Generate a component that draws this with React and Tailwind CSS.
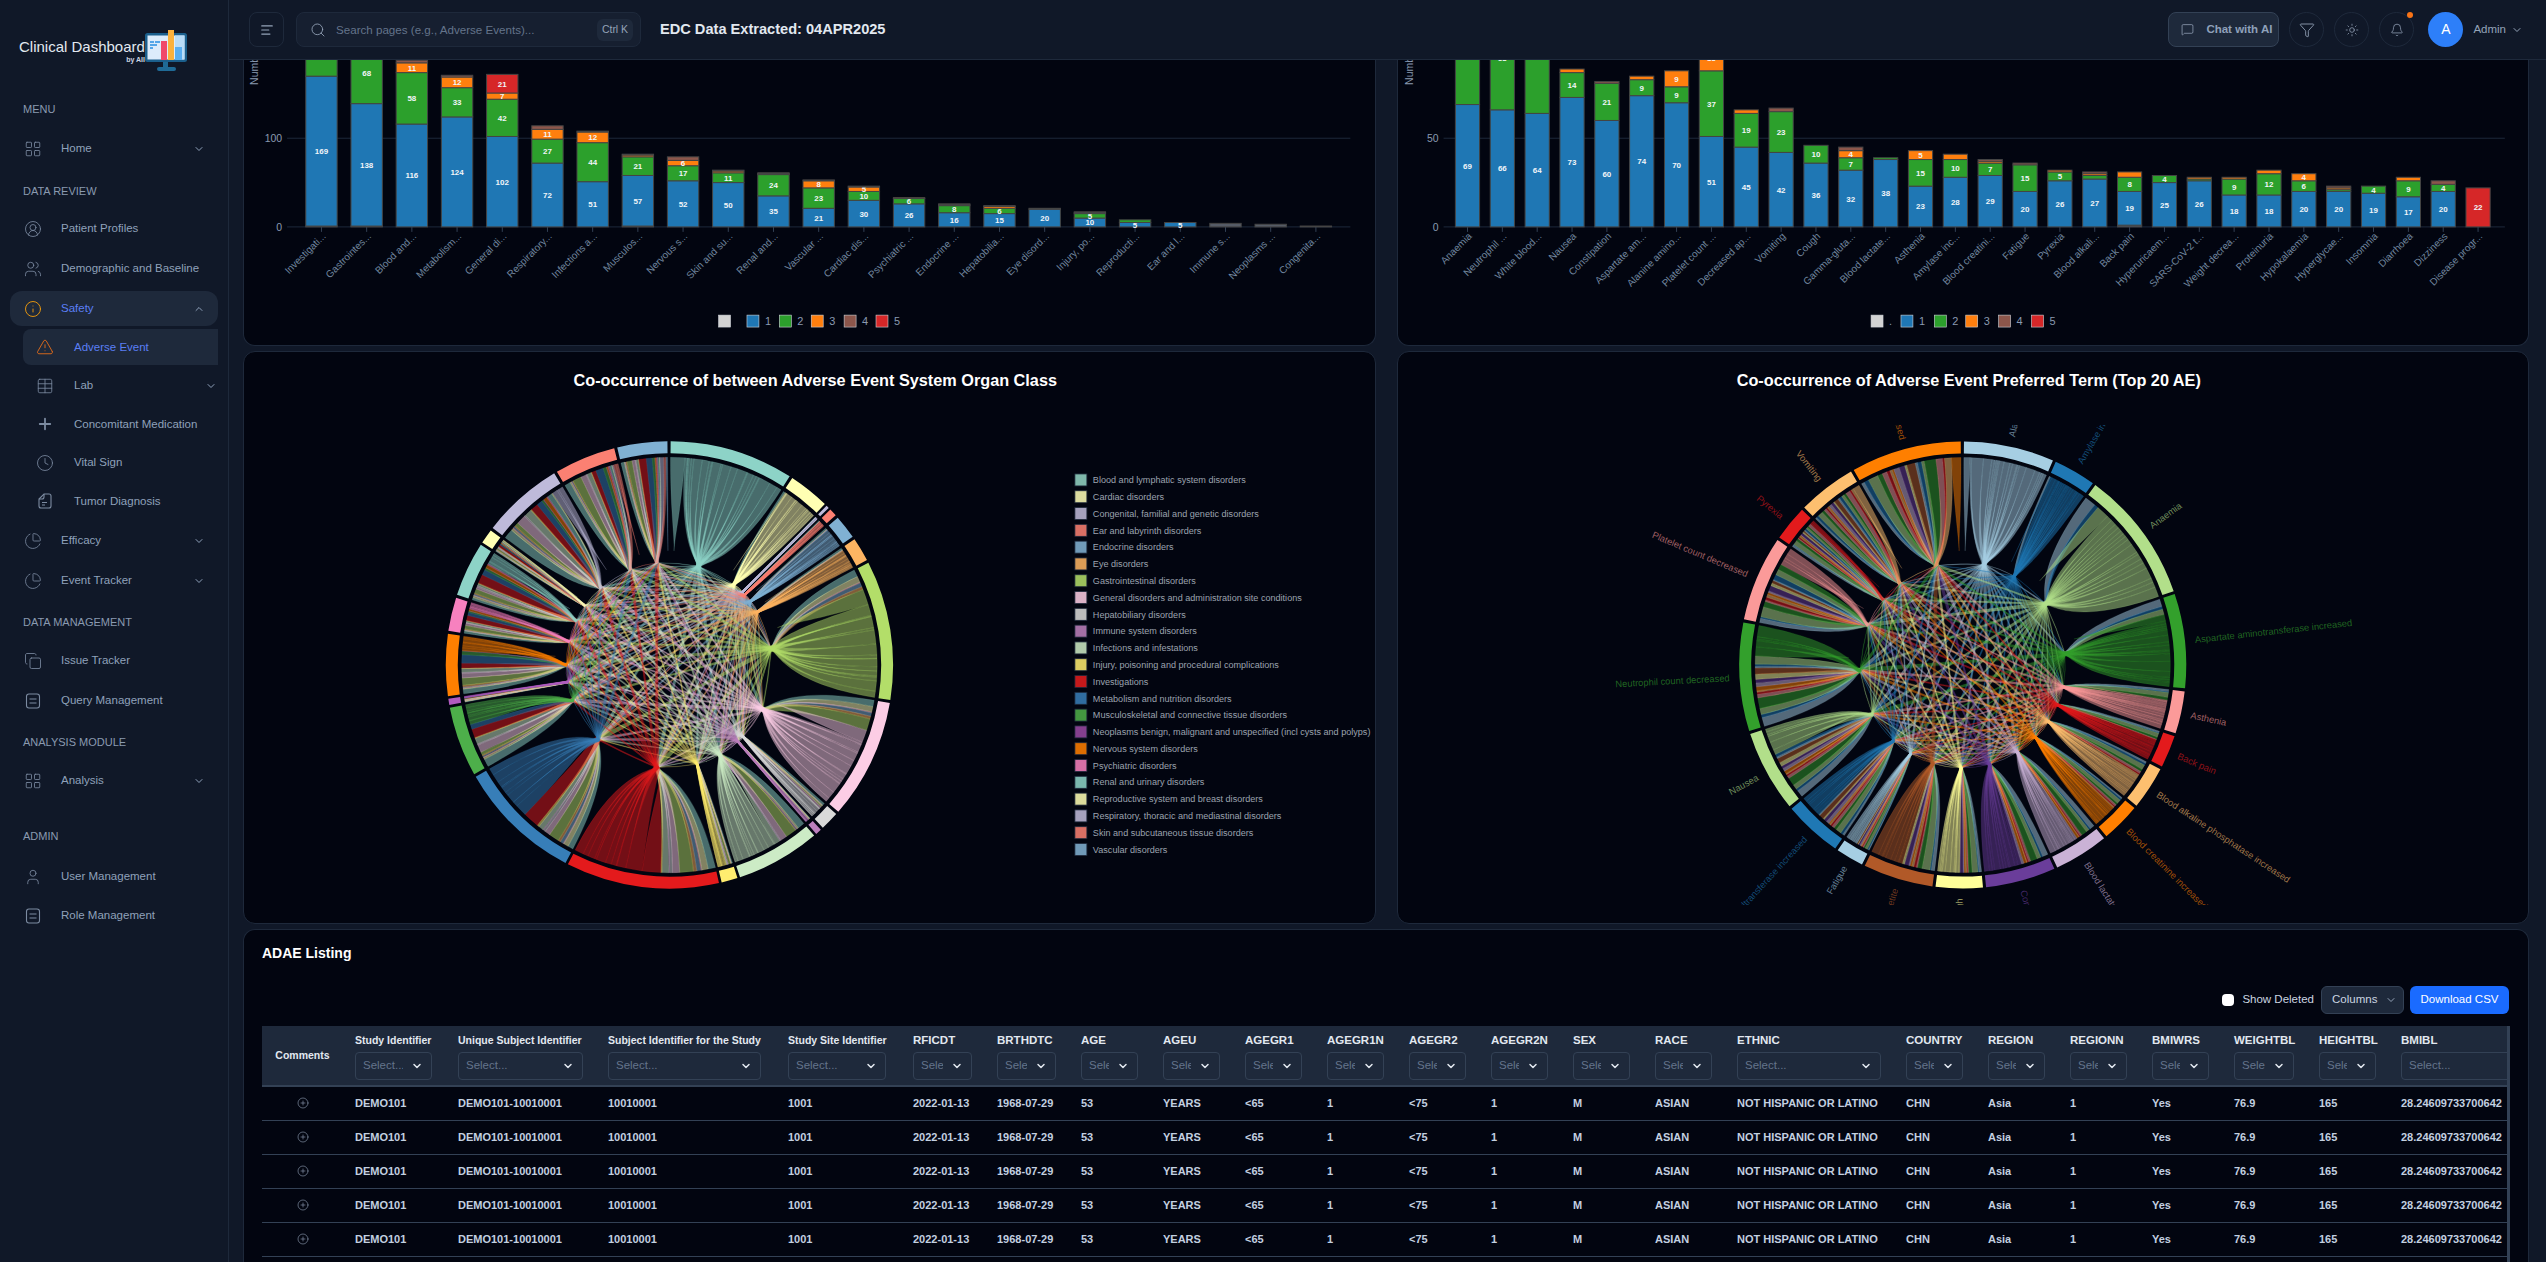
import React from "react";
import {
  ChevronDown, ChevronUp, CircleUserRound, Users, Info, TriangleAlert, Table, Plus, Clock, ChartPie, Copy, User,
  LayoutGrid, Search, AlignLeft, MessageSquare, Funnel, Sun, Bell, CirclePlus,
} from "lucide-react";

const FONT = "[font-family:'Liberation_Sans',Arial,sans-serif]";

const DocLines = ({ size = 18, className = "" }) => (
  <svg width={size} height={size} viewBox="0 0 18 18" fill="none" stroke="currentColor" strokeWidth="1.1" className={className}>
    <rect x="2.5" y="2" width="13" height="14" rx="2.5" />
    <path d="M5.5 7h7M5.5 11h7" />
  </svg>
);
const TumorDoc = ({ size = 18, className = "" }) => (
  <svg width={size} height={size} viewBox="0 0 18 18" fill="none" stroke="currentColor" strokeWidth="1.1" className={className}>
    <path d="M8 2h5a2 2 0 0 1 2 2v10a2 2 0 0 1-2 2H5a2 2 0 0 1-2-2V7z" />
    <path d="M8 2v3a2 2 0 0 1-2 2H3M6 10.5h5M6 13h3" />
  </svg>
);

const Logo = () => (
  <svg width="46" height="44" viewBox="143 29 46 44" className="shrink-0 -ml-[2px]">
    <rect x="163" y="61" width="5" height="7" fill="#1f6a96" />
    <rect x="157" y="67" width="19" height="4" rx="2" fill="#1f6a96" />
    <rect x="145" y="33" width="42" height="29" rx="2.5" fill="#1b5f8c" />
    <rect x="147.5" y="35.5" width="37" height="24" fill="#dcecfb" />
    <rect x="175" y="35.5" width="9.5" height="24" fill="#b9dcf7" />
    <rect x="150" y="41" width="4" height="2" fill="#54a6e8" />
    <rect x="155" y="41" width="5" height="2" fill="#54a6e8" />
    <rect x="150" y="44" width="7" height="2" fill="#54a6e8" />
    <rect x="150" y="47" width="3" height="2" fill="#54a6e8" />
    <rect x="161" y="41" width="6" height="19" fill="#f0486a" />
    <rect x="168" y="30" width="6" height="30" fill="#fbb13c" />
    <rect x="175" y="47" width="7" height="13" fill="#5aaef0" />
  </svg>
);

function Section({ children, className = "" }) {
  return <div className={`h-5 flex items-center pl-[13px] text-[11px] text-[#8a9ab0] uppercase ${className}`}>{children}</div>;
}
function Item({ icon, label, chevron }) {
  return (
    <div className="h-10 flex items-center">
      <div className="w-[51px] pl-[14px] shrink-0 text-[#7c8ba1] flex items-center">{icon}</div>
      <span className="flex-1 text-[11.5px] font-medium text-[#8fa1ba] whitespace-nowrap">{label}</span>
      {chevron && <ChevronDown size={12} className="text-[#8fa1ba] mr-[13px]" />}
    </div>
  );
}
function SubItem({ icon, label, chevron, active }) {
  return (
    <div className="h-[38.5px] flex items-center ml-[13px]">
      <div className={`flex items-center w-full h-[36px] rounded-l-lg ${active ? "bg-[#1e293b]" : ""}`}>
        <div className={`w-[51px] pl-[13px] shrink-0 flex items-center ${active ? "text-[#f97316]" : "text-[#7c8ba1]"}`}>{icon}</div>
        <span className={`flex-1 text-[11.5px] font-medium whitespace-nowrap ${active ? "text-[#5b7ff5]" : "text-[#8fa1ba]"}`}>{label}</span>
        {chevron && <ChevronDown size={12} className="text-[#8fa1ba] mr-[1px]" />}
      </div>
    </div>
  );
}

function Sidebar() {
  const ic = { size: 18, strokeWidth: 1.1 };
  return (
    <aside className="w-[229px] shrink-0 h-full bg-[#101828] border-r border-[#1e293b] overflow-hidden">
      <div className="h-[99px] pt-[29px] pl-[19px] flex items-start">
        <div className="w-[126px] pt-[9px] shrink-0">
          <div className="text-[15px] leading-[18px] text-[#e2e8f0] whitespace-nowrap">Clinical Dashboard</div>
          <div className="text-[7px] leading-[8px] font-bold text-[#cbd5e1] text-right">by AII</div>
        </div>
        <Logo />
      </div>
      <div className="mx-[10px]">
        <Section className="mb-[10px]">Menu</Section>
        <Item icon={<LayoutGrid {...ic} />} label="Home" chevron />
        <Section className="mt-[12px] mb-2">Data Review</Section>
        <Item icon={<CircleUserRound {...ic} />} label="Patient Profiles" />
        <Item icon={<Users {...ic} />} label="Demographic and Baseline" />
        <div className="h-[39px] flex items-start">
          <div className="mt-[2px] h-[35px] w-full rounded-xl bg-[#1e293b] flex items-center">
            <div className="w-[51px] pl-[14px] shrink-0 text-[#f59e0b]"><Info size={18} strokeWidth={1.2} /></div>
            <span className="flex-1 text-[11.5px] font-medium text-[#5b7ff5]">Safety</span>
            <ChevronUp size={12} className="text-[#8fa1ba] mr-[13px]" />
          </div>
        </div>
        <SubItem active icon={<TriangleAlert {...ic} />} label="Adverse Event" />
        <SubItem icon={<Table {...ic} />} label="Lab" chevron />
        <SubItem icon={<Plus size={18} strokeWidth={2.4} />} label="Concomitant Medication" />
        <SubItem icon={<Clock {...ic} />} label="Vital Sign" />
        <SubItem icon={<TumorDoc />} label="Tumor Diagnosis" />
        <Item icon={<ChartPie {...ic} />} label="Efficacy" chevron />
        <Item icon={<ChartPie {...ic} />} label="Event Tracker" chevron />
        <Section className="mt-[12px] mb-2">Data Management</Section>
        <Item icon={<Copy {...ic} />} label="Issue Tracker" />
        <Item icon={<DocLines />} label="Query Management" />
        <Section className="mt-[12px] mb-2">Analysis Module</Section>
        <Item icon={<LayoutGrid {...ic} />} label="Analysis" chevron />
        <Section className="mt-[26px] mb-[10px]">Admin</Section>
        <Item icon={<User {...ic} />} label="User Management" />
        <div className="-mt-[1px]"><Item icon={<DocLines />} label="Role Management" /></div>
      </div>
    </aside>
  );
}

function Header() {
  const round = "w-[35px] h-[35px] rounded-full border border-[#1e293b] flex items-center justify-center text-[#94a3b8]";
  return (
    <header className="h-[60px] shrink-0 bg-[#101828] border-b border-[#1e293b] flex items-center pl-[20px] pr-[23px]">
      <div className="w-[35px] h-[35px] rounded-lg border border-[#1e293b] flex items-center justify-center text-[#94a3b8]"><AlignLeft size={14} /></div>
      <div className="ml-[12px] w-[345px] h-[35px] rounded-lg border border-[#1e293b] bg-[#161f30] flex items-center pl-[13px] pr-[7px]">
        <Search size={16} strokeWidth={1.3} className="text-[#94a3b8]" />
        <span className="ml-[10px] flex-1 text-[11.6px] text-[#64748b] whitespace-nowrap">Search pages (e.g., Adverse Events)...</span>
        <span className="w-[36px] h-[22px] rounded-md bg-[#1e293b] text-[10.5px] text-[#94a3b8] flex items-center justify-center">Ctrl K</span>
      </div>
      <div className="ml-[19px] text-[14.6px] font-bold text-[#e2e8f0] whitespace-nowrap">EDC Data Extracted: 04APR2025</div>
      <div className="flex-1" />
      <div className="w-[111px] h-[35px] rounded-lg border border-[#334155] bg-[#1e293b] flex items-center pl-[12px] text-[#94a3b8]">
        <MessageSquare size={13} strokeWidth={1.4} />
        <span className="ml-[12px] text-[11.5px] font-bold text-[#8fa1ba] whitespace-nowrap">Chat with AI</span>
      </div>
      <div className={`ml-[10px] ${round}`}><Funnel size={16} strokeWidth={1.3} /></div>
      <div className={`ml-[10px] ${round}`}><Sun size={14} strokeWidth={1.3} /></div>
      <div className={`ml-[10px] relative ${round}`}>
        <Bell size={14} strokeWidth={1.3} />
        <span className="absolute -top-[1px] right-[0px] w-[6px] h-[6px] rounded-full bg-[#f97316]" />
      </div>
      <div className="ml-[14px] w-[35px] h-[35px] rounded-full bg-[#2d7ff9] text-white text-[14px] font-medium flex items-center justify-center">A</div>
      <span className="ml-[10px] text-[11.5px] text-[#94a3b8]">Admin</span>
      <ChevronDown size={12} className="ml-[5px] text-[#94a3b8]" />
    </header>
  );
}

const GRADE = ["#555b66", "#1f77b4", "#2ca02c", "#ff7f0e", "#8c564b", "#d62728"];

const LEFT_BARS = [
  ["Investigati...", [1, 169, 66]], ["Gastrointes...", [1, 138, 68]], ["Blood and...", [0, 116, 58, 11, 3]],
  ["Metabolism...", [0, 124, 33, 12, 2]], ["General di...", [0, 102, 42, 7, 0, 21]], ["Respiratory...", [0, 72, 27, 11, 4]],
  ["Infections a...", [0, 51, 44, 12, 1]], ["Musculos...", [1, 57, 21, 2, 1]], ["Nervous s...", [0, 52, 17, 6, 4]],
  ["Skin and su...", [0, 50, 11, 2, 1]], ["Renal and...", [0, 35, 24, 1, 1]], ["Vascular ...", [0, 21, 23, 8, 1]],
  ["Cardiac dis...", [0, 30, 10, 5, 1]], ["Psychiatric ...", [0, 26, 6, 1]], ["Endocrine ...", [0, 16, 8, 1, 1]],
  ["Hepatobilia...", [0, 15, 6, 2, 1]], ["Eye disord...", [0, 20, 0, 0, 1]], ["Injury, po...", [0, 10, 5, 1, 1]],
  ["Reproducti...", [0, 5, 3]], ["Ear and l...", [0, 5]], ["Immune s...", [4]], ["Neoplasms ...", [3]], ["Congenita...", [1]],
];
const RIGHT_BARS = [
  ["Anaemia", [0, 69, 72]], ["Neutrophil ...", [0, 66, 58]], ["White blood...", [0, 64, 72]], ["Nausea", [0, 73, 14, 2]],
  ["Constipation", [0, 60, 21, 0, 1]], ["Aspartate am...", [0, 74, 9, 2]], ["Alanine amino...", [0, 70, 9, 9]],
  ["Platelet count ...", [0, 51, 37, 15]], ["Decreased ap...", [0, 45, 19, 2]], ["Vomiting", [0, 42, 23, 0, 2]],
  ["Cough", [0, 36, 10]], ["Gamma-gluta...", [0, 32, 7, 4, 2]], ["Blood lactate...", [0, 38, 1]], ["Asthenia", [0, 23, 15, 5]],
  ["Amylase inc...", [0, 28, 10, 3]], ["Blood creatini...", [0, 29, 7, 1, 1]], ["Fatigue", [0, 20, 15, 0, 1]], ["Pyrexia", [0, 26, 5, 1]],
  ["Blood alkali...", [0, 27, 2, 1, 1]], ["Back pain", [1, 19, 8, 3]], ["Hyperuricaem...", [0, 25, 4]], ["SARS-CoV-2 t...", [0, 26, 1, 1]],
  ["Weight decrea...", [0, 18, 9, 1]], ["Proteinuria", [0, 18, 12, 2]], ["Hypokalaemia", [0, 20, 6, 4]], ["Hyperglycae...", [0, 20, 1, 1, 1]],
  ["Insomnia", [0, 19, 4]], ["Diarrhoea", [0, 17, 9, 2]], ["Dizziness", [0, 20, 4, 0, 2]], ["Disease progr...", [0, 0, 0, 0, 0, 22]],
];

function BarChart({ vb, data, scale, first, step, barW, x0, x1, grid, minLabel, legend, titleX }) {
  const zero = 227.5;
  return (
    <svg viewBox={vb} className="w-full h-full block" style={{ fontFamily: "'Liberation Sans', Arial, sans-serif" }}>
      <line x1={x0} x2={x1} y1={zero - grid * scale} y2={zero - grid * scale} stroke="#1e293b" />
      <line x1={x0} x2={x1} y1={zero} y2={zero} stroke="#1e293b" />
      <text x={x0 - 5} y={zero - grid * scale + 4} textAnchor="end" fontSize="10.5" fill="#8a9ab0">{grid}</text>
      <text x={x0 - 5} y={zero + 4} textAnchor="end" fontSize="10.5" fill="#8a9ab0">0</text>
      <text x={titleX} y={85} transform={`rotate(-90 ${titleX} 85)`} fontSize="10.5" fill="#8a9ab0">Number of Subjects</text>
      {data.map(([label, segs], i) => {
        const cx = first + i * step;
        let acc = 0;
        return (
          <g key={i}>
            <line x1={cx} x2={cx} y1={zero} y2={zero + 5} stroke="#334155" />
            {segs.map((v, k) => {
              if (!v) return null;
              const y = zero - (acc + v) * scale;
              const h = v * scale;
              acc += v;
              return (
                <g key={k}>
                  <rect x={cx - barW / 2} y={y} width={barW} height={h} fill={GRADE[k]} stroke="#444" strokeWidth="1" />
                  {k > 0 && v >= minLabel && (
                    <text x={cx} y={y + h / 2 + 3} textAnchor="middle" fontSize="8" fontWeight="700" fill="#f1f5f9">{v}</text>
                  )}
                </g>
              );
            })}
            <text x={cx + 5} y={zero + 10} textAnchor="end" transform={`rotate(-45 ${cx + 5} ${zero + 10})`} fontSize="10" fill="#71859f">{label}</text>
          </g>
        );
      })}
      {legend.map(([x, c, t], i) => (
        <g key={i}>
          <rect x={x} y={316} width={12} height={12} fill={c} stroke="#d1d5db" strokeWidth="0.6" />
          <text x={x + 18} y={326} fontSize="11" fill="#8a9ab0">{t}</text>
        </g>
      ))}
    </svg>
  );
}

const polar = (cx, cy, r, a) => {
  const t = (a * Math.PI) / 180;
  return [cx + r * Math.sin(t), cy - r * Math.cos(t)];
};
const pt = (p) => `${p[0].toFixed(1)} ${p[1].toFixed(1)}`;
const noise = (i, j) => {
  const a = Math.min(i, j);
  const b = Math.max(i, j);
  return ((Math.imul(a * 131 + b * 17 + 7, 2654435761) >>> 0) % 1000) / 1000;
};

function Chord({ cx, cy, groups }) {
  const R = 224, Ri = 212, Rc = 208, Hub = 103;
  const P = (r, a) => polar(cx, cy, r, a);
  const n = groups.length;
  const sub = groups.map((g, i) => {
    const size = g[1] - g[0];
    const w = groups.map((h, j) => (j === i ? size * 0.9 : (h[1] - h[0]) * (0.35 + noise(i, j))));
    const tot = w.reduce((s, v) => s + v, 0);
    let a = g[0];
    return w.map((v) => {
      const d = (v / tot) * size;
      const r = [a, a + d];
      a += d;
      return r;
    });
  });
  const mid = (g) => (g[0] + g[1]) / 2;
  const ribbons = [];
  for (let i = 0; i < n; i++) {
    const mi = mid(groups[i]);
    const [sa, sb] = sub[i][i];
    const sm = (sa + sb) / 2;
    ribbons.push({
      c: groups[i][2],
      d: `M${pt(P(Rc, sa))}A${Rc} ${Rc} 0 0 1 ${pt(P(Rc, sb))}C${pt(P(Rc * 0.75, sb))} ${pt(P(Rc * 0.62, sm))} ${pt(P(Rc * 0.55, sm))}C${pt(P(Rc * 0.62, sm))} ${pt(P(Rc * 0.75, sa))} ${pt(P(Rc, sa))}Z`,
    });
    for (let j = i + 1; j < n; j++) {
      const mj = mid(groups[j]);
      const [a0, a1] = sub[i][j];
      const [b0, b1] = sub[j][i];
      const di = (a1 - a0) * 0.3 + 0.5;
      const dj = (b1 - b0) * 0.3 + 0.5;
      const mm = [(P(Hub, mi)[0] + P(Hub, mj)[0]) / 2, (P(Hub, mi)[1] + P(Hub, mj)[1]) / 2];
      const ctl = [cx + (mm[0] - cx) * 1.02, cy + (mm[1] - cy) * 1.02];
      const d =
        `M${pt(P(Rc, a0))}A${Rc} ${Rc} 0 0 1 ${pt(P(Rc, a1))}` +
        `C${pt(P(Rc * 0.56, a1))} ${pt(P(Hub * 1.05, mi + di))} ${pt(P(Hub, mi + di))}` +
        `Q${pt(ctl)} ${pt(P(Hub, mj - dj))}` +
        `C${pt(P(Hub * 1.05, mj - dj))} ${pt(P(Rc * 0.56, b0))} ${pt(P(Rc, b0))}` +
        `A${Rc} ${Rc} 0 0 1 ${pt(P(Rc, b1))}` +
        `C${pt(P(Rc * 0.56, b1))} ${pt(P(Hub * 1.05, mj + dj))} ${pt(P(Hub, mj + dj))}` +
        `Q${pt(ctl)} ${pt(P(Hub, mi - di))}` +
        `C${pt(P(Hub * 1.05, mi - di))} ${pt(P(Rc * 0.56, a0))} ${pt(P(Rc, a0))}Z`;
      ribbons.push({ c: groups[i][2], d });
    }
  }
  return (
    <g>
      {ribbons.map((r, i) => (
        <path key={i} d={r.d} fill={r.c} fillOpacity="0.5" stroke={r.c} strokeOpacity="0.28" strokeWidth="0.6" />
      ))}
      {groups.map((g, i) => {
        const large = g[1] - g[0] > 180 ? 1 : 0;
        return (
          <path
            key={i}
            fill={g[2]}
            d={`M${pt(P(R, g[0]))}A${R} ${R} 0 ${large} 1 ${pt(P(R, g[1]))}L${pt(P(Ri, g[1]))}A${Ri} ${Ri} 0 ${large} 0 ${pt(P(Ri, g[0]))}Z`}
          />
        );
      })}
    </g>
  );
}

const SOC = [
  [0.3, 32.5, "#8dd3c7", "Blood and lymphatic system disorders", "#7fb8ab"],
  [33.3, 44, "#ffffb3", "Cardiac disorders", "#dcdca0"],
  [44.6, 45.4, "#bebada", "Congenital, familial and genetic disorders", "#a5a1bd"],
  [46, 48, "#fb8072", "Ear and labyrinth disorders", "#d96f64"],
  [48.8, 55, "#80b1d3", "Endocrine disorders", "#709ab8"],
  [55.8, 62, "#fdb462", "Eye disorders", "#db9c56"],
  [62.8, 99, "#b3de69", "Gastrointestinal disorders", "#9bc05c"],
  [99.8, 131, "#fccde5", "General disorders and administration site conditions", "#dbb2c7"],
  [131.8, 136.7, "#d9d9d9", "Hepatobiliary disorders", "#bcbcbc"],
  [137.4, 139, "#bc80bd", "Immune system disorders", "#a36fa4"],
  [139.7, 161.6, "#ccebc5", "Infections and infestations", "#b1cbab"],
  [162.3, 166.5, "#ffed6f", "Injury, poisoning and procedural complications", "#dccd61"],
  [167.2, 207, "#e41a1c", "Investigations", "#c5191b"],
  [207.7, 240, "#377eb8", "Metabolism and nutrition disorders", "#306da0"],
  [240.8, 259, "#4daf4a", "Musculoskeletal and connective tissue disorders", "#439840"],
  [259.7, 261.3, "#b05bc0", "Neoplasms benign, malignant and unspecified (incl cysts and polyps)", "#843f8e"],
  [262, 278, "#ff7f00", "Nervous system disorders", "#dd6e01"],
  [278.8, 287.5, "#f781bf", "Psychiatric disorders", "#d670a6"],
  [288.3, 302.5, "#8dd3c7", "Renal and urinary disorders", "#7ab7ad"],
  [303.2, 307, "#ffffb3", "Reproductive system and breast disorders", "#dcdc9c"],
  [307.8, 329, "#bebada", "Respiratory, thoracic and mediastinal disorders", "#a5a1bd"],
  [329.8, 345.7, "#fb8072", "Skin and subcutaneous tissue disorders", "#d96f64"],
  [346.5, 359.5, "#80b1d3", "Vascular disorders", "#709ab8"],
];
const PT = [
  [0.3, 23.8, "#a6cee3", "Alanine aminotransferase increased"],
  [24.6, 35.6, "#1f78b4", "Amylase increased"],
  [36.4, 70.7, "#b2df8a", "Anaemia"],
  [71.5, 96, "#33a02c", "Aspartate aminotransferase increased"],
  [96.8, 107.8, "#fb9a99", "Asthenia"],
  [108.6, 117, "#e31a1c", "Back pain"],
  [117.8, 129, "#fdbf6f", "Blood alkaline phosphatase increased"],
  [129.8, 140, "#ff7f00", "Blood creatinine increased"],
  [140.8, 155, "#cab2d6", "Blood lactate dehydrogenase increased"],
  [155.8, 174, "#6a3d9a", "Constipation"],
  [174.8, 187, "#ffff99", "Cough"],
  [187.8, 206, "#b15928", "Decreased appetite"],
  [206.8, 214, "#a6cee3", "Fatigue"],
  [214.8, 230, "#1f78b4", "Gamma-glutamyltransferase increased"],
  [230.8, 252, "#b2df8a", "Nausea"],
  [252.8, 281, "#33a02c", "Neutrophil count decreased"],
  [281.8, 304, "#fb9a99", "Platelet count decreased"],
  [304.8, 314, "#e31a1c", "Pyrexia"],
  [314.8, 330, "#fdbf6f", "Vomiting"],
  [330.8, 359.5, "#ff7f00", "White blood cell count decreased"],
];

function LeftChord() {
  return (
    <svg viewBox="243 425 1132 480" className="w-full h-[480px] block" style={{ fontFamily: "'Liberation Sans', Arial, sans-serif" }}>
      <Chord cx={669} cy={665} groups={SOC} />
      {SOC.map((g, i) => {
        const y = 479.7 + i * 16.82;
        return (
          <g key={i}>
            <rect x={1075} y={y - 6} width={12} height={12} fill={g[4]} stroke="#1e293b" strokeWidth="0.8" />
            <text x={1093} y={y + 3.2} fontSize="9.1" fill="#9ca3af">{g[3]}</text>
          </g>
        );
      })}
    </svg>
  );
}
function RightChord() {
  const cx = 1962, cy = 665;
  return (
    <svg viewBox="1396 425 1133 480" className="w-full h-[480px] block" style={{ fontFamily: "'Liberation Sans', Arial, sans-serif" }}>
      <Chord cx={cx} cy={cy} groups={PT} />
      {PT.map((g, i) => {
        const a = (g[0] + g[1]) / 2;
        const [x, y] = polar(cx, cy, 234, a);
        const right = a < 180;
        const rot = right ? a - 90 : a + 90;
        return (
          <text key={i} x={x} y={y} dy="3.5" fontSize="9.4" fill={g[2]} fillOpacity="0.62" textAnchor={right ? "start" : "end"} transform={`rotate(${rot} ${x} ${y})`}>
            {g[3]}
          </text>
        );
      })}
    </svg>
  );
}

const COLS = [
  ["Study Identifier", "w-[103px]", "w-[77px]", "DEMO101", "text-[10.5px]"],
  ["Unique Subject Identifier", "w-[150px]", "w-[125px]", "DEMO101-10010001", "text-[10.5px]"],
  ["Subject Identifier for the Study", "w-[180px]", "w-[153px]", "10010001", "text-[10.5px]"],
  ["Study Site Identifier", "w-[125px]", "w-[98px]", "1001", "text-[10.5px]"],
  ["RFICDT", "w-[84px]", "w-[59px]", "2022-01-13"],
  ["BRTHDTC", "w-[84px]", "w-[59px]", "1968-07-29"],
  ["AGE", "w-[82px]", "w-[57px]", "53"],
  ["AGEU", "w-[82px]", "w-[57px]", "YEARS"],
  ["AGEGR1", "w-[82px]", "w-[57px]", "<65"],
  ["AGEGR1N", "w-[82px]", "w-[57px]", "1"],
  ["AGEGR2", "w-[82px]", "w-[57px]", "<75"],
  ["AGEGR2N", "w-[82px]", "w-[57px]", "1"],
  ["SEX", "w-[82px]", "w-[57px]", "M"],
  ["RACE", "w-[82px]", "w-[57px]", "ASIAN"],
  ["ETHNIC", "w-[169px]", "w-[144px]", "NOT HISPANIC OR LATINO"],
  ["COUNTRY", "w-[82px]", "w-[57px]", "CHN"],
  ["REGION", "w-[82px]", "w-[57px]", "Asia"],
  ["REGIONN", "w-[82px]", "w-[57px]", "1"],
  ["BMIWRS", "w-[82px]", "w-[57px]", "Yes"],
  ["WEIGHTBL", "w-[85px]", "w-[60px]", "76.9"],
  ["HEIGHTBL", "w-[82px]", "w-[57px]", "165"],
  ["BMIBL", "w-[150px]", "w-[125px]", "28.24609733700642"],
];

function Listing() {
  return (
    <div className="flex-1 min-h-0 bg-[#020510] border border-[#1e293b] border-b-0 rounded-t-xl px-[18px] pt-[13px] overflow-hidden">
      <div className="h-5 flex items-center text-[14px] font-bold text-white">ADAE Listing</div>
      <div className="mt-[23px] h-[28px] flex items-center justify-end pr-[1px]">
        <span className="w-3 h-3 rounded-sm bg-white" />
        <span className="ml-2 text-[11.5px] text-[#cbd5e1]">Show Deleted</span>
        <div className="ml-[7px] w-[83px] h-[28px] rounded-md border border-[#334155] bg-[#1e293b] flex items-center pl-[10px] text-[11.5px] text-[#cbd5e1]">
          Columns<ChevronDown size={12} className="ml-[8px] text-[#94a3b8]" />
        </div>
        <div className="ml-[6px] w-[99px] h-[28px] rounded-md bg-[#1a6bff] flex items-center justify-center text-[11.5px] text-white">Download CSV</div>
      </div>
      <div className="mt-[12px] overflow-hidden border-r-[3px] border-[#334155]">
        <table className="table-fixed w-[2277px] text-left">
          <thead>
            <tr className="h-[60px] bg-[#1e293b] border-b-2 border-[#334155]">
              <th className="w-[81px] text-center text-[10.5px] font-bold text-[#e2e8f0]">Comments</th>
              {COLS.map((c) => (
                <th key={c[0]} className={`${c[1]} px-3 font-bold align-top`}>
                  <div className={`h-[26px] pt-[5px] ${c[4] || "text-[11.5px]"} leading-[18px] text-[#e2e8f0] whitespace-nowrap`}>{c[0]}</div>
                  <div className={`${c[2]} h-[28px] rounded border border-[#334155] bg-[#1e293b] flex items-center pl-[7px]`}>
                    <span className="flex-1 min-w-0 overflow-hidden whitespace-nowrap text-[11.5px] font-normal text-[#64748b]">Select...</span>
                    <span className="w-[28px] shrink-0 flex justify-center text-[#e2e8f0]"><ChevronDown size={12} strokeWidth={3} /></span>
                  </div>
                </th>
              ))}
            </tr>
          </thead>
          <tbody>
            {[0, 1, 2, 3, 4, 5].map((r) => (
              <tr key={r} className="h-[34px] border-b border-[#334155]">
                <td><CirclePlus size={12} strokeWidth={1.2} className="mx-auto text-[#94a3b8]" /></td>
                {COLS.map((c) => (
                  <td key={c[0]} className="px-3 text-[11px] font-bold text-[#c3d0e0] whitespace-nowrap">{c[3]}</td>
                ))}
              </tr>
            ))}
          </tbody>
        </table>
      </div>
    </div>
  );
}

export default function App() {
  const card = "bg-[#020510] border border-[#1e293b]";
  const title = "pt-[14px] pl-[12px] h-[42px] text-center text-[16.25px] leading-[28px] font-bold text-white";
  return (
    <div className={`w-[2546px] h-[1262px] flex overflow-hidden bg-[#101828] ${FONT}`}>
      <Sidebar />
      <main className="flex-1 min-w-0 h-full flex flex-col">
        <Header />
        <div className="flex-1 min-h-0 flex flex-col gap-[5px] pl-[14px] pr-[17px] overflow-hidden">
          <div className="grid grid-cols-2 gap-x-[21px] h-[286px] shrink-0">
            <div className={`${card} border-t-0 rounded-b-xl overflow-hidden`}>
              <BarChart vb="243 60 1132 286" data={LEFT_BARS} scale={0.89} first={319.5} step={45.36} barW={31.5} x0={285} x1={1352} grid={100} minLabel={5}
                titleX={256}
                legend={[[718, "#d3d3d3", ""], [746.5, GRADE[1], "1"], [779, GRADE[2], "2"], [811, GRADE[3], "3"], [844, GRADE[4], "4"], [876, GRADE[5], "5"]]} />
            </div>
            <div className={`${card} border-t-0 rounded-b-xl overflow-hidden`}>
              <BarChart vb="1396 60 1133 286" data={RIGHT_BARS} scale={1.78} first={1465} step={34.97} barW={24.3} x0={1441} x1={2506} grid={50} minLabel={4}
                titleX={1410}
                legend={[[1870, "#d3d3d3", "."], [1900, GRADE[1], "1"], [1933.5, GRADE[2], "2"], [1965, GRADE[3], "3"], [1998, GRADE[4], "4"], [2031, GRADE[5], "5"]]} />
            </div>
          </div>
          <div className="grid grid-cols-2 gap-x-[21px] h-[573px] shrink-0">
            <div className={`${card} rounded-xl overflow-hidden`}>
              <div className={title}>Co-occurrence of between Adverse Event System Organ Class</div>
              <div className="mt-[31px]"><LeftChord /></div>
            </div>
            <div className={`${card} rounded-xl overflow-hidden`}>
              <div className={title}>Co-occurrence of Adverse Event Preferred Term (Top 20 AE)</div>
              <div className="mt-[31px]"><RightChord /></div>
            </div>
          </div>
          <Listing />
        </div>
      </main>
    </div>
  );
}
